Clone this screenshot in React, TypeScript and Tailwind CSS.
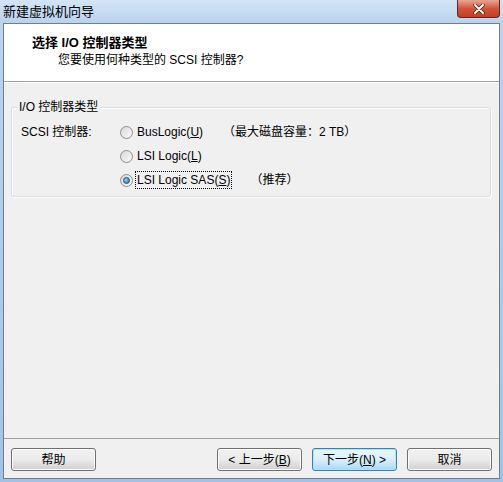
const cjk = '"Liberation Sans", "Noto Sans CJK SC", sans-serif';

function Radio({ checked }: { checked?: boolean }) {
  return (
    <span className="w-[13px] h-[13px] rounded-full border border-[#8f8f8f] bg-gradient-to-br from-[#d8d8d8] to-[#fbfbfb] flex items-center justify-center shrink-0">
      {checked && (
        <span className="w-[7px] h-[7px] rounded-full bg-[radial-gradient(circle_at_35%_35%,#8fd0f5,#1670b0)] border border-[#1a4f7e]" />
      )}
    </span>
  );
}

function Btn({ children, focused, className }: { children: React.ReactNode; focused?: boolean; className?: string }) {
  return (
    <div
      className={`w-[85px] h-[23px] rounded-[3px] border flex items-center justify-center text-[12px] text-black whitespace-nowrap ${
        focused
          ? 'border-[#3c7fb1] bg-gradient-to-b from-[#eaf6fd] via-[#d9f0fc] to-[#a7d9f5] shadow-[inset_0_0_0_1px_#a8e4fa]'
          : 'border-[#707070] bg-gradient-to-b from-[#f2f2f2] via-[#ebebeb] to-[#cfcfcf] shadow-[inset_0_0_0_1px_#fcfcfc]'
      } ${className ?? ''}`}
    >
      {children}
    </div>
  );
}

export default function App() {
  return (
    <div className="w-[503px] h-[482px] flex flex-col bg-gradient-to-b from-[#bcd5ef] to-[#a3c2e3]" style={{ fontFamily: cjk }}>
      {/* Title bar */}
      <div className="h-[23px] flex items-center relative shrink-0 bg-gradient-to-b from-[#d3e4f6] to-[#b9d3ee]">
        <span className="pl-[3px] text-[13px] text-black">新建虚拟机向导</span>
        <div className="absolute right-[3px] top-0 w-[43px] h-[18px] rounded-b-[4px] border border-t-0 border-[#5c2b25] bg-gradient-to-b from-[#e8a493] via-[#d0553a] to-[#c43d1f] flex items-center justify-center">
          <svg width="12" height="10" viewBox="0 0 12 10">
            <path d="M2 1 L10 9 M10 1 L2 9" stroke="#4a1a12" strokeWidth="3.4" strokeLinecap="round" />
            <path d="M2 1 L10 9 M10 1 L2 9" stroke="#ffffff" strokeWidth="2" strokeLinecap="round" />
          </svg>
        </div>
      </div>

      {/* Client area */}
      <div className="ml-[3px] w-[497px] h-[456px] border border-[#6f7e93] bg-[#f0f0f0] flex flex-col">
        {/* Header */}
        <div className="h-[58px] bg-white border-b border-[#a0a0a0] shrink-0 pt-[11px]">
          <div className="pl-[28px] text-[13px] font-bold text-black leading-[16px]">选择 I/O 控制器类型</div>
          <div className="pl-[54px] text-[12px] text-black leading-[16px] mt-[1px]">您要使用何种类型的 SCSI 控制器?</div>
        </div>
        <div className="h-px bg-white shrink-0" />

        {/* Body */}
        <div className="flex-1 px-[7px] pt-[24px]">
          <div className="relative h-[90px] w-[480px] border border-[#d5dfe5] rounded-[3px] shadow-[inset_1px_1px_0_#ffffff,1px_1px_0_#ffffff]">
            <span className="absolute left-[5px] top-[-9px] bg-[#f0f0f0] px-[2px] text-[12px] leading-[16px] text-black">I/O 控制器类型</span>
            <div className="flex pl-[9px] pt-[16px] text-[12px] text-black whitespace-nowrap">
              <div className="w-[99px] leading-[16px]">SCSI 控制器:</div>
              <div className="flex flex-col gap-[8px]">
                <div className="flex items-center h-[16px]">
                  <Radio />
                  <span className="ml-[4px] w-[86px]">BusLogic(<u>U</u>)</span>
                  <span>（最大磁盘容量：2 TB）</span>
                </div>
                <div className="flex items-center h-[16px]">
                  <Radio />
                  <span className="ml-[4px]">LSI Logic(<u>L</u>)</span>
                </div>
                <div className="flex items-center h-[16px]">
                  <Radio checked />
                  <span className="ml-[2px] px-[1px] border border-dotted border-black leading-[16px]">LSI Logic SAS(<u>S</u>)</span>
                  <span className="ml-[18px]">（推荐）</span>
                </div>
              </div>
            </div>
          </div>
        </div>

        {/* Footer */}
        <div className="h-[40px] border-t border-[#a0a0a0] shrink-0 flex items-start pt-[9px] px-[7px]">
          <Btn>帮助</Btn>
          <div className="flex-1" />
          <Btn>&lt; 上一步(<u>B</u>)</Btn>
          <Btn focused className="ml-[10px]">下一步(<u>N</u>) &gt;</Btn>
          <Btn className="ml-[10px]">取消</Btn>
        </div>
      </div>
    </div>
  );
}
